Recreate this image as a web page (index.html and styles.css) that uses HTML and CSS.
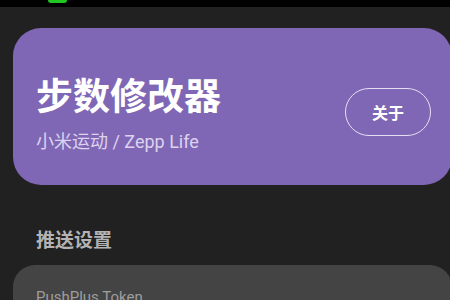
FILE: index.html
```html
<!doctype html>
<html lang="zh-CN">
<head>
    <meta charset="utf-8"/>
    <meta content="width=device-width, initial-scale=1" name="viewport"/>
    <title>步数修改器</title>
    <link rel="stylesheet" href="styles.css">
</head>
<body>
    <div class="statusbar">
        <span class="pill"></span>
    </div>
    <div class="wrapper">
        <div class="hero">
            <div class="hero-text">
                <h1>步数修改器</h1>
                <div class="sub">小米运动 / Zepp Life</div>
            </div>
            <button class="about">关于</button>
        </div>

        <h2 class="section">推送设置</h2>
        <div class="panel">
            <div class="field-label">PushPlus Token</div>
        </div>
    </div>
</body>
</html>
```

FILE: styles.css
```css
html, body {
    margin: 0;
    background: #212121;
    overflow: hidden;
    font-family: Roboto, "Noto Sans CJK SC", sans-serif;
}

.statusbar {
    height: 7px;
    background: #000;
    display: flex;
}
.pill {
    display: block;
    width: 19px;
    height: 3px;
    margin-left: 48px;
    background: #1fc71f;
    border-radius: 0 0 3px 3px;
}

.wrapper {
    width: 439px;
    padding: 21px 0 0 13px;
}

.hero {
    display: flex;
    align-items: center;
    justify-content: space-between;
    background: #7f67b5;
    border-radius: 28px;
    padding: 48px 20px 31px 23px;
}
.hero h1 {
    margin: 0;
    font-size: 37px;
    line-height: 44px;
    font-weight: 700;
    color: #fff;
}
.hero .sub {
    margin-top: 10px;
    font-size: 18px;
    line-height: 24px;
    color: #ddd3ee;
}
.about {
    width: 86px;
    height: 48px;
    margin-bottom: 7px;
    margin-right: 1px;
    background: transparent;
    border: 1.5px solid #e6def4;
    border-radius: 24px;
    color: #fff;
    font-family: inherit;
    font-size: 16px;
    font-weight: 700;
}

.section {
    margin: 44px 0 12px 23px;
    font-size: 19px;
    line-height: 24px;
    font-weight: 700;
    color: #b3b3b3;
}

.panel {
    background: #444;
    border-radius: 22px;
    padding: 22px 23px;
    height: 80px;
}
.field-label {
    font-size: 15px;
    line-height: 20px;
    color: #9e9e9e;
}
```
